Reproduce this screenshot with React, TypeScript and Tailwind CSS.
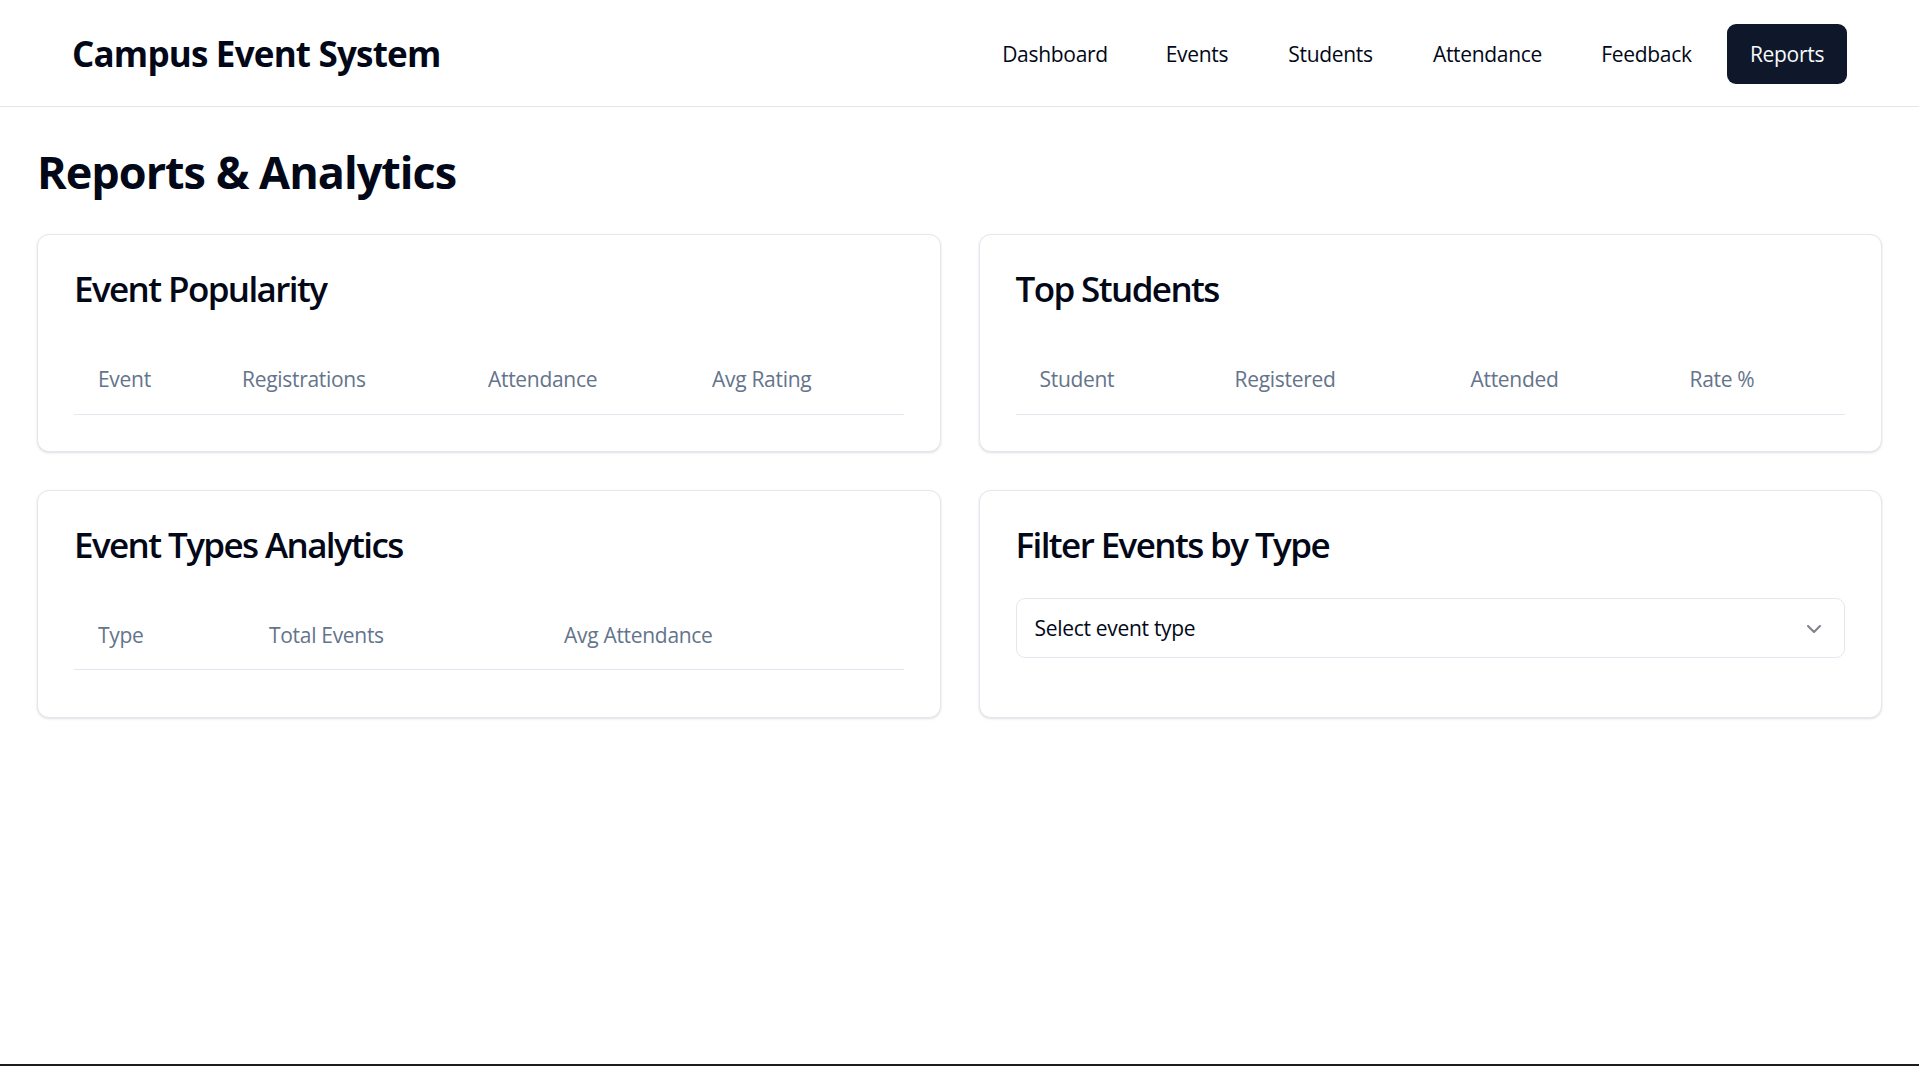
import React from "react";
import { ChevronDown } from "lucide-react";

const navItems = [
  { label: "Dashboard", w: "w-[150px]" },
  { label: "Events", w: "w-[110px]" },
  { label: "Students", w: "w-[133px]" },
  { label: "Attendance", w: "w-[157px]" },
  { label: "Feedback", w: "w-[137px]" },
];

function Card({ title, children }: { title: string; children: React.ReactNode }) {
  return (
    <div className="rounded-[12px] border border-[#e2e8f0] bg-white text-[#020817] shadow-sm">
      <div className="p-[36px]">
        <h3 className="pt-[1px] text-[35px] font-semibold leading-[34px] tracking-[-1.6px]">{title}</h3>
      </div>
      <div className="px-[36px] pb-[36px]">{children}</div>
    </div>
  );
}

function HeadTable({ cols }: { cols: { label: string; w: string }[] }) {
  return (
    <table className="w-full table-fixed text-[21px] tracking-[-0.3px]">
      <thead>
        <tr className="border-b border-[#e2e8f0]">
          {cols.map((c) => (
            <th
              key={c.label}
              className={`${c.w} h-[72px] px-[24px] pt-[4px] text-left align-middle font-medium text-[#64748b]`}
            >
              {c.label}
            </th>
          ))}
        </tr>
      </thead>
      <tbody />
    </table>
  );
}

export default function App() {
  return (
    <div
      className="flex min-h-screen flex-col bg-white text-[#020817]"
      style={{ fontFamily: '"Open Sans", "Noto Sans", sans-serif' }}
    >
      <header className="flex h-[107px] items-center justify-between border-b border-[#e2e8f0] px-[72px] pt-[2px]">
        <h1 className="text-[35px] font-bold tracking-[-0.8px]">Campus Event System</h1>
        <nav className="flex items-center gap-[12px]">
          {navItems.map((n) => (
            <button
              key={n.label}
              className={`${n.w} h-[60px] rounded-[9px] pt-[2px] text-center text-[21px] font-medium tracking-[-0.3px] text-[#020817]`}
            >
              {n.label}
            </button>
          ))}
          <button className="h-[60px] w-[120px] rounded-[9px] bg-[#0f172a] pt-[2px] text-center text-[21px] font-medium tracking-[-0.3px] text-[#f8fafc]">
            Reports
          </button>
        </nav>
      </header>

      <main className="px-[37px] pt-[40px]">
        <h2 className="mb-[37px] text-[45px] font-bold leading-[50px] tracking-[-1px]">
          Reports &amp; Analytics
        </h2>

        <div className="grid grid-cols-2 gap-[38px]">
          <Card title="Event Popularity">
            <HeadTable
              cols={[
                { label: "Event", w: "w-[144px]" },
                { label: "Registrations", w: "w-[246px]" },
                { label: "Attendance", w: "w-[224px]" },
                { label: "Avg Rating", w: "w-auto" },
              ]}
            />
          </Card>
          <Card title="Top Students">
            <HeadTable
              cols={[
                { label: "Student", w: "w-[195px]" },
                { label: "Registered", w: "w-[236px]" },
                { label: "Attended", w: "w-[219px]" },
                { label: "Rate %", w: "w-auto" },
              ]}
            />
          </Card>
          <Card title="Event Types Analytics">
            <HeadTable
              cols={[
                { label: "Type", w: "w-[171px]" },
                { label: "Total Events", w: "w-[295px]" },
                { label: "Avg Attendance", w: "w-auto" },
              ]}
            />
          </Card>
          <Card title="Filter Events by Type">
            <div>
              <button className="flex h-[60px] w-full items-center justify-between rounded-[9px] border border-[#e2e8f0] bg-white px-[18px] pt-[2px] text-[21px] tracking-[-0.3px] text-[#020817]">
                <span>Select event type</span>
                <ChevronDown className="h-[24px] w-[24px] opacity-50" />
              </button>
              <div className="mt-[23px]" />
            </div>
          </Card>
        </div>
      </main>

      <div className="mt-auto h-[2px] bg-[#1c1c1c]" />
    </div>
  );
}
